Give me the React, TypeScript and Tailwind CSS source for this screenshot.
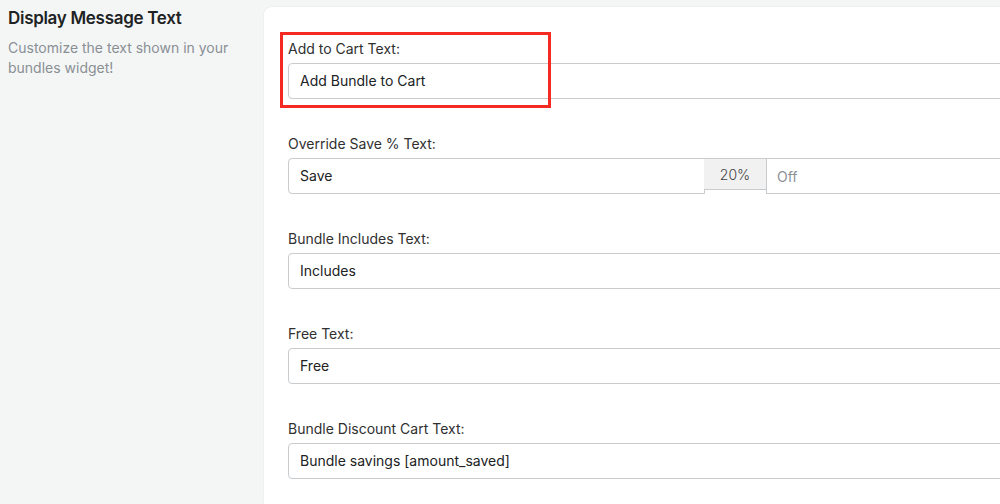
import React from "react";

const font = { fontFamily: "Inter, 'Noto Sans', sans-serif" };

function Field({ label, value }: { label: string; value: string }) {
  return (
    <div className="flex flex-col">
      <div className="text-[14px] leading-[20px] text-[#303030]">{label}</div>
      <div className="mt-[4px] h-[36px] rounded-[4px] border border-[#c9cccf] bg-white flex items-center px-[11px] pb-[2px] text-[14px] text-[#202223]">
        {value}
      </div>
    </div>
  );
}

export default function App() {
  return (
    <div style={font} className="w-[1000px] h-[504px] overflow-hidden bg-[#f4f6f6] flex">
      <div className="w-[264px] shrink-0 pl-[8px] pt-[7px]">
        <div className="text-[17px] leading-[22px] font-semibold text-[#202223] tracking-[-0.3px]">Display Message Text</div>
        <div className="mt-[9px] text-[14px] leading-[20px] text-[#8a8f94] pr-[30px]">
          Customize the text shown in your bundles widget!
        </div>
      </div>
      <div className="relative mt-[7px] w-[780px] shrink-0 rounded-tl-[8px] bg-white shadow-[0_0_2px_rgba(0,0,0,0.08)] pl-[24px] pr-[24px] pt-[32px] flex flex-col gap-[35px]">
        <div className="absolute left-[16px] top-[25px] w-[271px] h-[76px] border-[3px] border-[#f52a22] pointer-events-none" />
        <Field label="Add to Cart Text:" value="Add Bundle to Cart" />
        <div className="flex flex-col">
          <div className="text-[14px] leading-[20px] text-[#303030]">Override Save % Text:</div>
          <div className="mt-[4px] flex items-start">
            <div className="w-[417px] h-[36px] rounded-l-[4px] border border-[#c9cccf] bg-white flex items-center px-[11px] pb-[2px] text-[14px] text-[#202223]">
              Save
            </div>
            <div className="w-[62px] h-[32px] border-t border-b border-[#c9cccf] bg-[#f1f1f1] flex items-center justify-center text-[14px] font-light text-[#444] -ml-px">
              20%
            </div>
            <div className="flex-1 h-[36px] border border-[#c9cccf] bg-white flex items-center px-[10px] text-[14px] text-[#8c9196]">
              Off
            </div>
          </div>
        </div>
        <Field label="Bundle Includes Text:" value="Includes" />
        <Field label="Free Text:" value="Free" />
        <Field label="Bundle Discount Cart Text:" value="Bundle savings [amount_saved]" />
      </div>
    </div>
  );
}
